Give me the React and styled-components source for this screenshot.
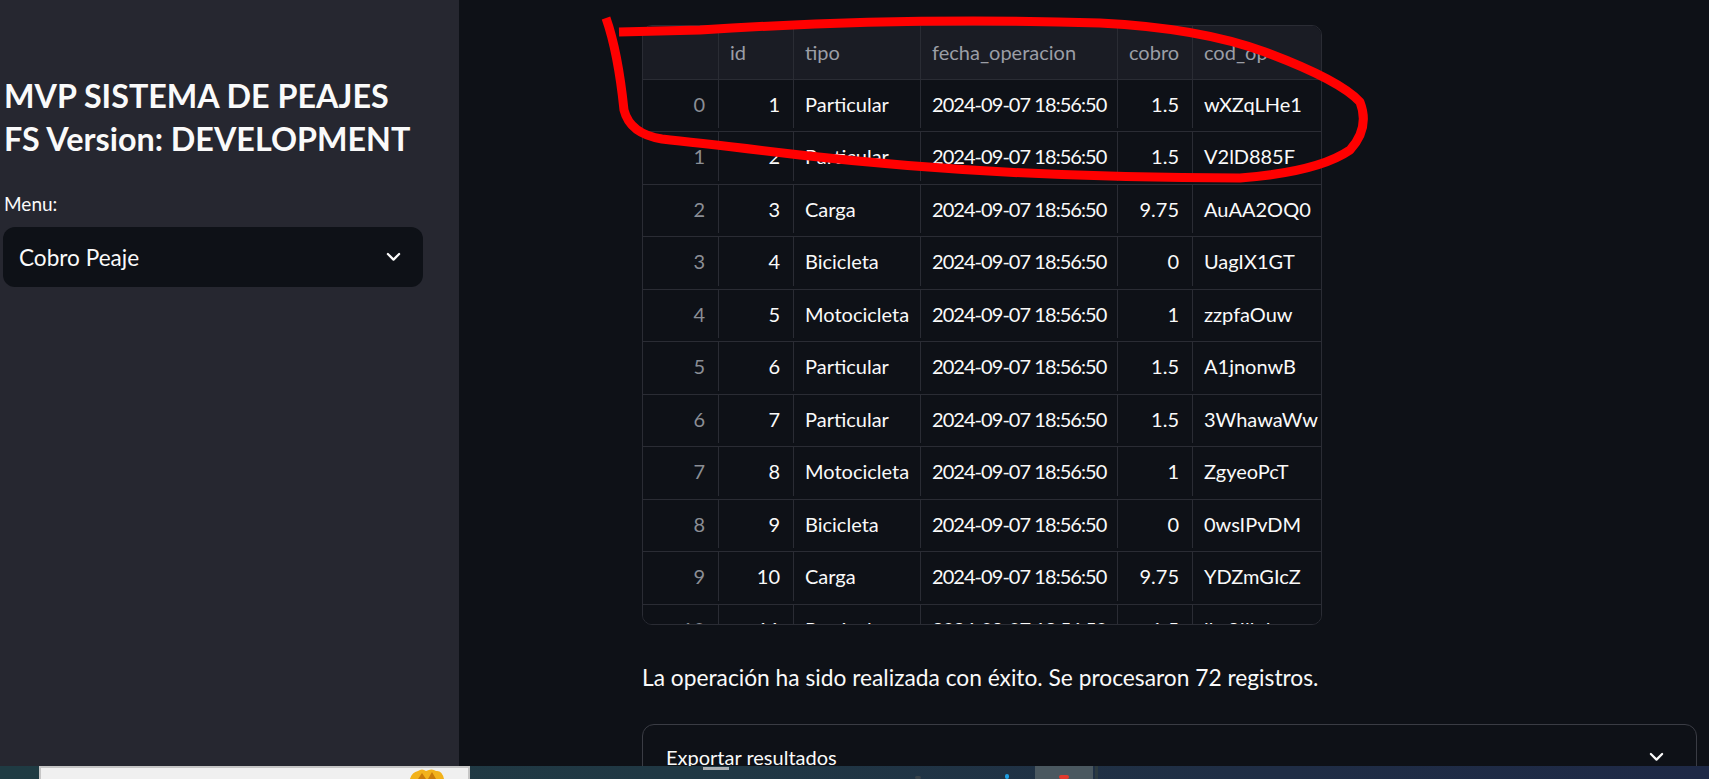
import React from "react";
import styled, { createGlobalStyle } from "styled-components";

const Global = createGlobalStyle`
  html, body { margin: 0; padding: 0; background: #0e1117; }
  body { font-family: "Lato", "Liberation Sans", sans-serif; }
  * { box-sizing: border-box; }
`;

const Page = styled.div`
  position: relative;
  width: 1709px;
  height: 779px;
  overflow: hidden;
  display: flex;
  flex-direction: column;
  background: #0e1117;
`;

const Body = styled.div`
  display: flex;
  height: 766px;
  overflow: hidden;
`;

const Sidebar = styled.aside`
  width: 459px;
  flex: none;
  background: #262730;
  padding: 74px 36px 0 3px;
  color: #fafafa;
`;

const Title = styled.h1`
  margin: 0 0 0 1px;
  font-size: 32.3px;
  line-height: 43px;
  font-weight: 700;
  white-space: nowrap;
`;

const Label = styled.div`
  margin-top: 28px;
  font-size: 19px;
  line-height: 31.5px;
  padding-left: 1px;
`;

const Select = styled.div`
  margin-top: 7.7px;
  width: 420px;
  height: 60px;
  border-radius: 12px;
  background: #0e1117;
  display: flex;
  align-items: center;
  justify-content: space-between;
  padding: 0 22px 0 16px;
  font-size: 22.6px;
`;

const Main = styled.main`
  flex: 1;
  padding: 25px 12px 0 183px;
  color: #fafafa;
`;

const TableWrap = styled.div`
  width: 680px;
  height: 600px;
  border: 1px solid #2a2c34;
  border-radius: 10px;
  overflow: hidden;
  background: #0e1117;
`;

const Row = styled.div`
  display: grid;
  grid-template-columns: 75px 75px 127px 197px 75px 129px;
  height: ${(p) => (p.$head ? "53.5px" : "52.5px")};
  padding-bottom: ${(p) => (p.$head ? "0" : "3px")};
  border-bottom: 1px solid #2a2c34;
  background: ${(p) => (p.$head ? "#1a1c24" : "#0e1117")};
`;

const Cell = styled.div`
  display: flex;
  align-items: center;
  justify-content: ${(p) => (p.$right ? "flex-end" : "flex-start")};
  padding: 0 ${(p) => (p.$right ? "13px" : "11px")} 0 12px;
  box-shadow: 1px 0 0 #2a2c34;
  font-size: 20px;
  letter-spacing: ${(p) => (p.$tight ? "-0.95px" : "0")};
  white-space: nowrap;
  overflow: hidden;
  color: ${(p) => (p.$tone === "head" ? "#9b9ea6" : p.$tone === "index" ? "#8b8e95" : "#fafafa")};
`;

const Message = styled.p`
  margin: 33.5px 0 0 0;
  font-size: 22.75px;
  line-height: 38.4px;
`;

const Expander = styled.div`
  margin-top: 27px;
  border: 1px solid #3a3c44;
  border-radius: 12px;
  height: 120px;
`;

const ExpanderHead = styled.div`
  display: flex;
  align-items: center;
  justify-content: space-between;
  padding: 13px 32px 0 23px;
  height: 52px;
  font-size: 20px;
`;

const Taskbar = styled.div`
  height: 13px;
  flex: none;
  display: flex;
  align-items: flex-start;
  background: linear-gradient(90deg, #1f3b43 0%, #203844 40%, #1f2d45 75%, #1e2946 100%);
`;

const Preview = styled.div`
  margin-left: 39px;
  width: 431px;
  height: 13px;
  background: #f0f0f0;
  border-top: 2px solid #c6c6c6;
  border-left: 2px solid #c6c6c6;
  border-right: 2px solid #c6c6c6;
  display: flex;
  justify-content: flex-end;
  padding-right: 22px;
`;

const TaskIcon = styled.div`
  margin-left: ${(p) => p.$gap}px;
  width: ${(p) => p.$w}px;
  height: ${(p) => p.$h}px;
  margin-top: ${(p) => p.$top || 0}px;
  background: ${(p) => p.$bg};
  border-radius: ${(p) => p.$r || 0}px;
`;

const ActiveButton = styled.div`
  margin-left: 26px;
  width: 58px;
  height: 13px;
  background: #4a5860;
  display: flex;
  justify-content: center;
`;

const Overlay = styled.svg`
  position: absolute;
  left: 0;
  top: 0;
  pointer-events: none;
`;

const Chevron = ({ size = 16 }) => (
  <svg width={size} height={size * 0.7} viewBox="0 0 16 11" fill="none">
    <polyline points="2,2 8,8 14,2" stroke="#fafafa" strokeWidth="2.4" strokeLinecap="round" strokeLinejoin="round" />
  </svg>
);

const DATE = "2024-09-07 18:56:50";
const rows = [
  [0, 1, "Particular", "1.5", "wXZqLHe1"],
  [1, 2, "Particular", "1.5", "V2lD885F"],
  [2, 3, "Carga", "9.75", "AuAA2OQ0"],
  [3, 4, "Bicicleta", "0", "UagIX1GT"],
  [4, 5, "Motocicleta", "1", "zzpfaOuw"],
  [5, 6, "Particular", "1.5", "A1jnonwB"],
  [6, 7, "Particular", "1.5", "3WhawaWw"],
  [7, 8, "Motocicleta", "1", "ZgyeoPcT"],
  [8, 9, "Bicicleta", "0", "0wsIPvDM"],
  [9, 10, "Carga", "9.75", "YDZmGIcZ"],
  [10, 11, "Particular", "1.5", "lkc2Ilkd"],
];

export default function App() {
  return (
    <Page>
      <Global />
      <Body>
        <Sidebar>
          <Title>MVP SISTEMA DE PEAJES</Title>
          <Title>FS Version: DEVELOPMENT</Title>
          <Label>Menu:</Label>
          <Select>
            <span>Cobro Peaje</span>
            <Chevron size={15} />
          </Select>
        </Sidebar>
        <Main>
          <TableWrap>
            <Row $head>
              <Cell $tone="head"></Cell>
              <Cell $tone="head">id</Cell>
              <Cell $tone="head">tipo</Cell>
              <Cell $tone="head">fecha_operacion</Cell>
              <Cell $tone="head">cobro</Cell>
              <Cell $tone="head">cod_op</Cell>
            </Row>
            {rows.map((r) => (
              <Row key={r[0]}>
                <Cell $tone="index" $right>{r[0]}</Cell>
                <Cell $right>{r[1]}</Cell>
                <Cell>{r[2]}</Cell>
                <Cell $tight>{DATE}</Cell>
                <Cell $right>{r[3]}</Cell>
                <Cell>{r[4]}</Cell>
              </Row>
            ))}
          </TableWrap>
          <Message>La operación ha sido realizada con éxito. Se procesaron 72 registros.</Message>
          <Expander>
            <ExpanderHead>
              <span>Exportar resultados</span>
              <Chevron size={15} />
            </ExpanderHead>
          </Expander>
        </Main>
      </Body>
      <Taskbar>
        <Preview>
          <svg width="38" height="11" viewBox="0 0 38 11">
            <path d="M2 11 Q4 4 10 3 Q14 0 18 3 Q24 0 28 3 Q34 2 36 11 Z" fill="#f2b21b" />
            <path d="M10 11 L14 5 L18 11 M20 11 L24 4 L28 11" fill="#c97a0a" />
          </svg>
        </Preview>
        <TaskIcon $gap={233} $w={26} $h={3} $top={1} $bg="#a9aeb2" />
        <TaskIcon $gap={186} $w={6} $h={3} $top={10} $bg="#39434a" $r={2} />
        <TaskIcon $gap={84} $w={4} $h={5} $top={8} $bg="#1e9fe3" $r={2} />
        <ActiveButton>
          <TaskIcon $gap={0} $w={10} $h={4} $top={9} $bg="#e23a2e" $r={5} />
        </ActiveButton>
        <TaskIcon $gap={2} $w={3} $h={13} $bg="#2c3a40" />
      </Taskbar>
      <Overlay width="1709" height="779" viewBox="0 0 1709 779">
        <path
          d="M619,32 L700,30 Q 900,17 1100,23 Q 1200,28 1265,52 Q 1340,80 1360,102 Q 1370,128 1350,150 Q 1318,172 1240,178 Q 1000,178 800,155 Q 700,143 662,139 Q 630,134 624,110 Q 618,52 606,18"
          fill="none"
          stroke="#ff0000"
          strokeWidth="9"
          strokeLinejoin="round"
        />
      </Overlay>
    </Page>
  );
}
